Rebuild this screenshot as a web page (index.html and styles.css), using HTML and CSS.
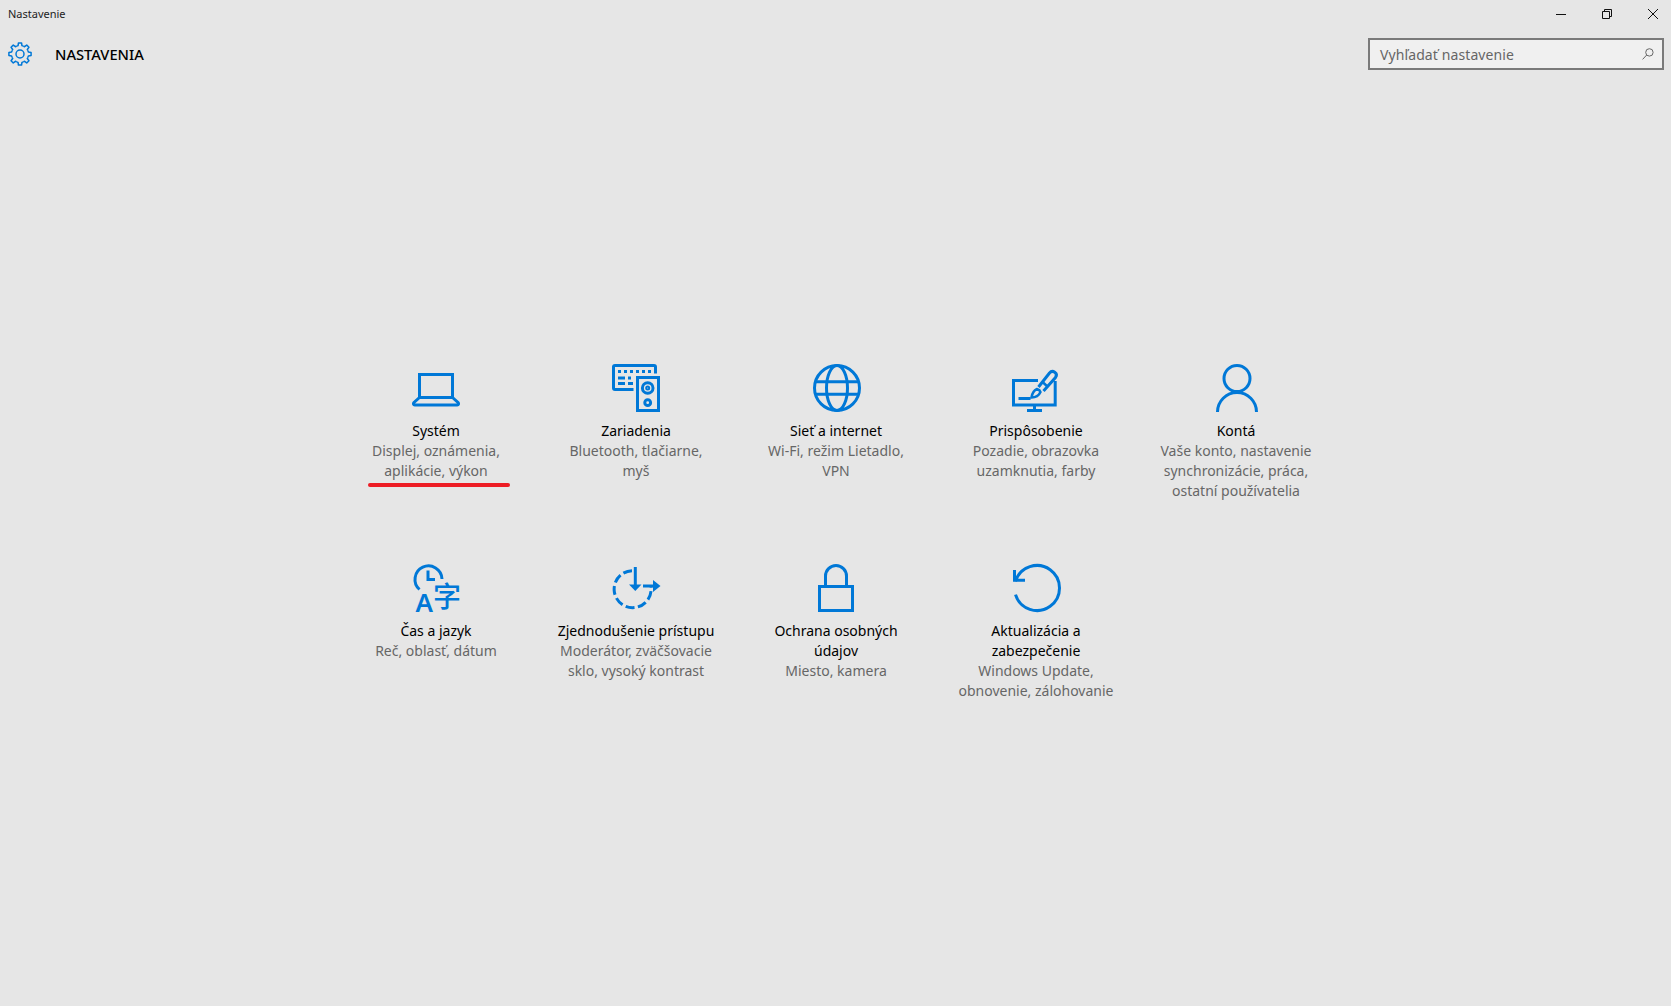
FILE: index.html
```html
<!DOCTYPE html>
<html lang="sk">
<head>
    <meta charset="UTF-8">
    <title>Nastavenie</title>
    <link rel="stylesheet" href="styles.css">
</head>
<body>

    <!-- titulok okna -->
    <div class="titlebar">
        <span class="app-name">Nastavenie</span>
        <div class="win-btns">
            <svg class="win-btn" viewBox="0 0 10 10"><path d="M0 5.500H10"/></svg>
            <svg class="win-btn" viewBox="0 0 10 10"><path d="M.5 2.500H7.500V9.500H.5ZM2.500 2.500V.5H9.500V7.500H7.500"/></svg>
            <svg class="win-btn" viewBox="0 0 10 10"><path d="M0 0L10 10M10 0L0 10"/></svg>
        </div>
    </div>

    <!-- hlavicka -->
    <div class="header">
        <svg class="gear" viewBox="0 0 24 24">
            <defs><path id="tooth" d="M8.71 4.05L10.07 3.62L10.44.91H13.56L13.93 3.62L15.29 4.05"/></defs>
            <use href="#tooth"/>
            <use href="#tooth" transform="rotate(45 12 12)"/>
            <use href="#tooth" transform="rotate(90 12 12)"/>
            <use href="#tooth" transform="rotate(135 12 12)"/>
            <use href="#tooth" transform="rotate(180 12 12)"/>
            <use href="#tooth" transform="rotate(225 12 12)"/>
            <use href="#tooth" transform="rotate(270 12 12)"/>
            <use href="#tooth" transform="rotate(315 12 12)"/>
            <circle cx="12" cy="12" r="4"/>
        </svg>
        <h1 class="page-title">NASTAVENIA</h1>
        <div class="search">
            <span class="search-text">Vyhľadať nastavenie</span>
            <svg class="search-icon" viewBox="0 0 12 12"><circle cx="7.400" cy="4.400" r="3.700"/><path d="M4.700 7L.6 11.400"/></svg>
        </div>
    </div>

    <!-- kategorie -->
    <div class="grid">

        <div class="item">
            <svg class="icon" viewBox="0 0 48 48">
                <path d="M7.500 10.500H40.500V33.500H7.500Z"/>
                <path d="M7.500 33.500L2 38.500Q.5 40.500 3 41H45Q47.500 40.500 46 38.500L40.500 33.500"/>
            </svg>
            <div class="name">Systém</div>
            <div class="desc">Displej, oznámenia,<br>aplikácie, výkon</div>
            <div class="mark"></div>
        </div>

        <div class="item">
            <svg class="icon" viewBox="0 0 48 48">
                <path d="M21.500 25.500H3Q1.500 25.500 1.500 24V3Q1.500 1.500 3 1.500H42Q43.500 1.500 43.500 3V9.500"/>
                <path d="M25.500 13.500H46.500V46.500H25.500Z"/>
                <circle cx="35.700" cy="24" r="5.300"/>
                <circle cx="35.700" cy="24" r="1"/>
                <circle cx="35.700" cy="38.700" r="2.900"/>
                <path d="M6 7.500H9M12 7.500H15M18 7.500H21M24 7.500H27M30 7.500H33M36 7.500H39M6 14H13M16 14H19M6 19.500H13M16 19.500H21"/>
            </svg>
            <div class="name">Zariadenia</div>
            <div class="desc">Bluetooth, tlačiarne,<br>myš</div>
        </div>

        <div class="item">
            <svg class="icon" viewBox="0 0 48 48">
                <circle cx="25" cy="24" r="22.500"/>
                <ellipse cx="25" cy="24" rx="10.500" ry="22.500"/>
                <path d="M4 17.700H46M4 30.300H46"/>
            </svg>
            <div class="name">Sieť a internet</div>
            <div class="desc">Wi-Fi, režim Lietadlo,<br>VPN</div>
        </div>

        <div class="item">
            <svg class="icon" viewBox="0 0 48 48">
                <path d="M26 16.500H1.500V41H43.200V17"/>
                <path d="M22.500 41V47M15 46.500H30"/>
                <path d="M6.500 34.500H18.500"/>
                <path d="M26.500 23L37.500 9C40.500 5.500 46.500 9 43.500 13.500L31.500 27"/>
                <path class="thin" d="M30.500 18L36 23"/>
                <path class="thin" d="M25 25Q20.500 27 19.500 33.500Q26 33.500 28.500 28Q28 26 25 25Z"/>
            </svg>
            <div class="name">Prispôsobenie</div>
            <div class="desc">Pozadie, obrazovka<br>uzamknutia, farby</div>
        </div>

        <div class="item">
            <svg class="icon" viewBox="0 0 48 48">
                <circle cx="25" cy="14.500" r="13"/>
                <path d="M5.500 48A19.500 19.500 0 0 1 44.500 48"/>
            </svg>
            <div class="name">Kontá</div>
            <div class="desc">Vaše konto, nastavenie<br>synchronizácie, práca,<br>ostatní používatelia</div>
        </div>

        <div class="item">
            <svg class="icon" viewBox="0 0 48 48">
                <path d="M7.500 25.500A13.500 13.500 0 1 1 30 15"/>
                <path d="M16 6.500V15.500H23"/>
                <text class="glyph" x="3.500" y="48" font-size="26">A</text>
                <text class="glyph cjk" x="21" y="42.500" font-size="28">字</text>
            </svg>
            <div class="name">Čas a jazyk</div>
            <div class="desc">Reč, oblasť, dátum</div>
        </div>

        <div class="item">
            <svg class="icon" viewBox="0 0 48 48">
                <path d="M20 6.700A18.500 18.500 0 1 0 39 23" stroke-dasharray="9 3.500"/>
                <path d="M23.300 3V24"/>
                <path class="fill" d="M17 20.500H29.500L23.300 27Z"/>
                <path d="M31 22H42"/>
                <path class="fill" d="M41 16L48.500 22L41 28Z"/>
            </svg>
            <div class="name">Zjednodušenie prístupu</div>
            <div class="desc">Moderátor, zväčšovacie<br>sklo, vysoký kontrast</div>
        </div>

        <div class="item">
            <svg class="icon" viewBox="0 0 48 48">
                <path d="M7.500 22.500H40.500V46.500H7.500Z"/>
                <path d="M13.500 22V12A10.500 10.500 0 0 1 34.500 12V22"/>
            </svg>
            <div class="name">Ochrana osobných<br>údajov</div>
            <div class="desc">Miesto, kamera</div>
        </div>

        <div class="item">
            <svg class="icon" viewBox="0 0 48 48">
                <path d="M3.500 17.400A22.500 22.500 0 1 1 3.500 30.600"/>
                <path d="M2.500 6V16.200H13"/>
            </svg>
            <div class="name">Aktualizácia a<br>zabezpečenie</div>
            <div class="desc">Windows Update,<br>obnovenie, zálohovanie</div>
        </div>

    </div>

</body>
</html>
```

FILE: styles.css
```css
/*zaklad*/
html,body{
    margin: 0;
    padding: 0;
}
body{
    height: 1006px;
    overflow: hidden;
    background-color: #e6e6e6;
    font-family: "Noto Sans", "Open Sans", sans-serif;
    color: #000;
}

/*titulok okna*/
.titlebar{
    height: 26px;
    display: flex;
    align-items: center;
    justify-content: space-between;
    padding: 0 13px 0 8px;
}
.app-name{
    font-size: 11px;
    color: #222;
}
.win-btns{
    display: flex;
    gap: 36px;
    padding-top: 2px;
}
.win-btn{
    width: 10px;
    height: 10px;
    fill: none;
    stroke: #111;
    stroke-width: 1;
}

/*hlavicka*/
.header{
    height: 56px;
    display: flex;
    align-items: center;
    padding: 0 7px 0 8px;
}
.gear{
    width: 24px;
    height: 24px;
    margin-top: -1px;
    fill: none;
    stroke: #0078d7;
    stroke-width: 1.5;
    stroke-linejoin: round;
}
.page-title{
    margin: 0 0 0 23px;
    font-size: 14.700px;
    font-weight: 500;
    flex: 1;
}
.search{
    width: 296px;
    height: 32px;
    box-sizing: border-box;
    border: 2px solid #7a7a7a;
    background-color: #f0f0f0;
    display: flex;
    align-items: center;
    justify-content: space-between;
    padding: 0 8px 0 10px;
}
.search-text{
    font-size: 14px;
    letter-spacing: 0.1px;
    color: #666;
}
.search-icon{
    width: 12px;
    height: 12px;
    fill: none;
    stroke: #666;
    stroke-width: 1;
}

/*kategorie*/
.grid{
    display: grid;
    grid-template-columns: repeat(5, 200px);
    grid-auto-rows: 200px;
    padding: 282px 0 0 336px;
}
.item{
    position: relative;
    text-align: center;
    font-size: 14px;
    line-height: 20px;
}
.icon{
    display: block;
    width: 48px;
    height: 48px;
    margin: 0 auto 9px;
    overflow: visible;
    fill: none;
    stroke: #0078d7;
    stroke-width: 3;
}
.icon .thin{
    stroke-width: 2.500;
}
.icon .fill{
    fill: #0078d7;
    stroke: none;
}
.icon .glyph{
    fill: #0078d7;
    stroke: none;
    font-family: "Noto Sans", sans-serif;
    font-weight: 600;
}
.icon .cjk{
    font-family: "Noto Sans CJK SC", sans-serif;
    font-weight: 500;
}
.desc{
    color: #666;
}

/*cervene podciarknutie*/
.mark{
    position: absolute;
    left: 32px;
    top: 119px;
    width: 142px;
    height: 4px;
    border-radius: 2px;
    background-color: #ed1c24;
}
```
